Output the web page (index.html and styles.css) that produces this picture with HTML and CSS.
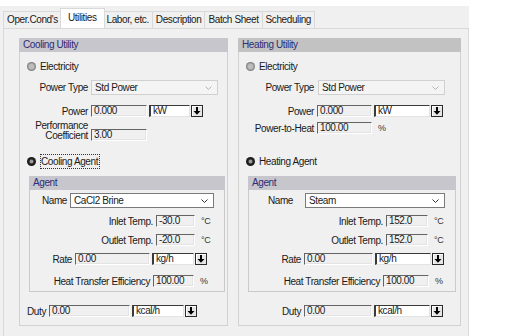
FILE: index.html
```html
<!DOCTYPE html>
<html lang="en">
    <head>
        <meta charset="utf-8">
        <link rel="stylesheet" href="styles.css">
    </head>
    <body>
<div class="window">
    <div class="tabs">
        <div class="tab">Oper.Cond's</div>
        <div class="tab active">Utilities</div>
        <div class="tab">Labor, etc.</div>
        <div class="tab">Description</div>
        <div class="tab">Batch Sheet</div>
        <div class="tab">Scheduling</div>
    </div>
    <div class="page">

        <!-- cooling -->
        <div class="group cool">
            <div class="ghead">Cooling Utility</div>
            <div class="row elec"><span class="radio"></span><span class="rtext">Electricity</span></div>
            <div class="row ptype">
                <span class="lbl w68">Power Type</span>
                <div class="combo off w127"><span>Std Power</span><svg width="7" height="4" viewBox="0 0 7 4"><path d="M0.5 0.5L3.5 3.5L6.5 0.5" fill="none" stroke="#b4b4b4"/></svg></div>
            </div>
            <div class="row power">
                <span class="lbl w68">Power</span>
                <div class="box w56">0.000</div>
                <div class="unit w41">kW</div>
                <div class="btn"><svg width="8" height="8" viewBox="0 0 8 8"><path d="M4 0v4.5" stroke="#000" stroke-width="2"/><path d="M0.5 4H7.5L4 7.8Z" fill="#000"/></svg></div>
            </div>
            <div class="row perf">
                <span class="lbl w68 two">Performance<br>Coefficient</span>
                <div class="box w56">3.00</div>
            </div>
            <div class="row agentsel"><span class="radio on"></span><span class="rtext focus">Cooling Agent</span></div>

            <div class="sub">
                <div class="ghead">Agent</div>
                <div class="row name">
                    <span class="lbl w37">Name</span>
                    <div class="combo w144"><span>CaCl2 Brine</span><svg width="7" height="4" viewBox="0 0 7 4"><path d="M0.5 0.5L3.5 3.5L6.5 0.5" fill="none" stroke="#333"/></svg></div>
                </div>
                <div class="row inlet">
                    <span class="lbl w123">Inlet Temp.</span>
                    <div class="box w39">-30.0</div>
                    <span class="suffix">°C</span>
                </div>
                <div class="row outlet">
                    <span class="lbl w123">Outlet Temp.</span>
                    <div class="box w39">-20.0</div>
                    <span class="suffix">°C</span>
                </div>
                <div class="row rate">
                    <span class="lbl w42">Rate</span>
                    <div class="box w75">0.00</div>
                    <div class="unit w42">kg/h</div>
                    <div class="btn"><svg width="8" height="8" viewBox="0 0 8 8"><path d="M4 0v4.5" stroke="#000" stroke-width="2"/><path d="M0.5 4H7.5L4 7.8Z" fill="#000"/></svg></div>
                </div>
                <div class="row hte">
                    <span class="lbl w120">Heat Transfer Efficiency</span>
                    <div class="box w41">100.00</div>
                    <span class="suffix">%</span>
                </div>
            </div>

            <div class="row duty">
                <span class="lbl w26">Duty</span>
                <div class="box w81">0.00</div>
                <div class="unit w52">kcal/h</div>
                <div class="btn"><svg width="8" height="8" viewBox="0 0 8 8"><path d="M4 0v4.5" stroke="#000" stroke-width="2"/><path d="M0.5 4H7.5L4 7.8Z" fill="#000"/></svg></div>
            </div>
        </div>

        <!-- heating -->
        <div class="group heat">
            <div class="ghead">Heating Utility</div>
            <div class="row elec"><span class="radio"></span><span class="rtext">Electricity</span></div>
            <div class="row ptype">
                <span class="lbl w75">Power Type</span>
                <div class="combo off w127 gap1"><span>Std Power</span><svg width="7" height="4" viewBox="0 0 7 4"><path d="M0.5 0.5L3.5 3.5L6.5 0.5" fill="none" stroke="#b4b4b4"/></svg></div>
            </div>
            <div class="row power">
                <span class="lbl w75">Power</span>
                <div class="box w55">0.000</div>
                <div class="unit w56">kW</div>
                <div class="btn"><svg width="8" height="8" viewBox="0 0 8 8"><path d="M4 0v4.5" stroke="#000" stroke-width="2"/><path d="M0.5 4H7.5L4 7.8Z" fill="#000"/></svg></div>
            </div>
            <div class="row pth">
                <span class="lbl w75">Power-to-Heat</span>
                <div class="box w55">100.00</div>
                <span class="suffix">%</span>
            </div>
            <div class="row agentsel"><span class="radio on"></span><span class="rtext">Heating Agent</span></div>

            <div class="sub">
                <div class="ghead">Agent</div>
                <div class="row name">
                    <span class="lbl w44">Name</span>
                    <div class="combo w140 gap9"><span>Steam</span><svg width="7" height="4" viewBox="0 0 7 4"><path d="M0.5 0.5L3.5 3.5L6.5 0.5" fill="none" stroke="#333"/></svg></div>
                </div>
                <div class="row inlet">
                    <span class="lbl w134">Inlet Temp.</span>
                    <div class="box w42">152.0</div>
                    <span class="suffix">°C</span>
                </div>
                <div class="row outlet">
                    <span class="lbl w134">Outlet Temp.</span>
                    <div class="box w42">152.0</div>
                    <span class="suffix">°C</span>
                </div>
                <div class="row rate">
                    <span class="lbl w52">Rate</span>
                    <div class="box w69">0.00</div>
                    <div class="unit w56">kg/h</div>
                    <div class="btn"><svg width="8" height="8" viewBox="0 0 8 8"><path d="M4 0v4.5" stroke="#000" stroke-width="2"/><path d="M0.5 4H7.5L4 7.8Z" fill="#000"/></svg></div>
                </div>
                <div class="row hte">
                    <span class="lbl w131">Heat Transfer Efficiency</span>
                    <div class="box w46">100.00</div>
                    <span class="suffix">%</span>
                </div>
            </div>

            <div class="row duty">
                <span class="lbl w62">Duty</span>
                <div class="box w68">0.00</div>
                <div class="unit w56">kcal/h</div>
                <div class="btn"><svg width="8" height="8" viewBox="0 0 8 8"><path d="M4 0v4.5" stroke="#000" stroke-width="2"/><path d="M0.5 4H7.5L4 7.8Z" fill="#000"/></svg></div>
            </div>
        </div>

    </div>
</div>
    </body>
</html>
```

FILE: styles.css
```css
body{
    margin: 0;
    background: #fff;
    font-family: "Liberation Sans", Arial, sans-serif;
    font-size: 10px;
    letter-spacing: -0.4px;
    color: #1a1a1a;
}
.window{
    width: 469px;
    height: 330px;
    margin-top: 6px;
    background: #f0f0f0;
}

/* tab strip */
.tabs{
    display: flex;
    align-items: flex-end;
    height: 22px;
    padding-left: 3px;
}
.tab{
    height: 16px;
    line-height: 15px;
    padding: 0 3px;
    border: 1px solid #d9d9d9;
    border-bottom: 0;
    margin-right: -1px;
    background: #f0f0f0;
}
.tab.active{
    height: 19px;
    line-height: 17px;
    background: #fff;
    margin-left: -1px;
    margin-right: -2px;
    padding: 0 7px;
    position: relative;
}
.page{
    display: flex;
    align-items: flex-start;
    gap: 10px;
    margin-left: 3px;
    height: 301px;
    border: 1px solid #d9d9d9;
    padding: 9px 0 0 15px;
}

/* group boxes */
.group{
    border: 1px solid #d2d2d2;
    border-top: 0;
    height: 287px;
}
.cool{ width: 207px; }
.heat{ width: 221px; }
.ghead{
    height: 14px;
    line-height: 14px;
    margin: 0 -1px;
    padding-left: 4px;
    background: #c6c6cc;
    color: #2c2c78;
}
.heat > .ghead{ background: #c2c2c2; }
.sub{
    margin-left: 9px;
    margin-top: 7px;
    height: 115px;
    border: 1px solid #cacaca;
    border-top: 0;
}
.cool .sub{ width: 194px; }
.heat .sub{ width: 206px; }

.row{
    display: flex;
    align-items: center;
}
.lbl{
    text-align: right;
    margin-right: 3px;
    white-space: nowrap;
}
.lbl.two{
    line-height: 10px;
    align-self: flex-start;
}

/* row spacing */
.elec{ height: 11px; margin-top: 9px; padding-left: 7px; }
.ptype{ height: 15px; margin-top: 8px; }
.power{ height: 12px; margin-top: 10px; }
.perf{ height: 22px; margin-top: 4px; align-items: flex-end; }
.perf .box{ margin-bottom: 2px; }
.pth{ height: 12px; margin-top: 5px; }
.agentsel{ height: 15px; margin-top: 11px; padding-left: 7px; }
.heat .agentsel{ margin-top: 20px; }
.name{ height: 15px; margin-top: 3px; }
.inlet, .outlet, .rate{ height: 12px; margin-top: 7px; }
.hte{ height: 12px; margin-top: 10px; }
.duty{ height: 12px; margin-top: 13px; }

/* widths */
.w26{ width: 26px; } .w37{ width: 37px; } .w39{ width: 39px; } .w41{ width: 41px; }
.w42{ width: 42px; } .w44{ width: 44px; } .w46{ width: 46px; } .w52{ width: 52px; }
.w55{ width: 55px; } .w56{ width: 56px; } .w62{ width: 62px; } .w68{ width: 68px; }
.w69{ width: 69px; } .w75{ width: 75px; } .w81{ width: 81px; } .w120{ width: 120px; }
.w123{ width: 123px; } .w127{ width: 127px; } .w131{ width: 131px; } .w134{ width: 134px; }
.w140{ width: 140px; } .w144{ width: 144px; }
.gap1{ margin-left: 1px; }
.gap9{ margin-left: 9px; }

/* radio buttons */
.radio{
    width: 9px;
    height: 9px;
    border-radius: 50%;
    background: radial-gradient(circle, #bdbdbd 0 35%, #8a8a8a 60%, #3c3c3c 100%);
    margin-right: 4px;
    flex: none;
}
.radio.on{
    background: radial-gradient(circle, #9a9a9a 0 22%, #222 38%, #111 100%);
}
.rtext{
    line-height: 11px;
}
.rtext.focus{
    border: 1px dotted #333;
    padding: 1px 1px 1px 0;
}

/* fields */
.box{
    box-sizing: border-box;
    height: 12px;
    line-height: 10px;
    padding-left: 2px;
    background: #f0f0f0;
    border-top: 1px solid #646464;
    border-left: 1px solid #646464;
    border-right: 1px solid #fff;
    border-bottom: 1px solid #fff;
    box-shadow: inset -1px -1px 0 #e3e3e3;
}
.unit{
    box-sizing: border-box;
    height: 12px;
    line-height: 10px;
    padding-left: 2px;
    margin-left: 2px;
    background: #fff;
    border-top: 1px solid #3a3a3a;
    border-left: 2px solid #3a3a3a;
    border-right: 1px solid #e3e3e3;
    border-bottom: 1px solid #e3e3e3;
}
.btn{
    box-sizing: border-box;
    width: 12px;
    height: 12px;
    margin-left: 1px;
    border: 1px solid #2a2a2a;
    box-shadow: inset 1px 1px 0 #fff;
    background: #e6e6e6;
    display: flex;
    align-items: center;
    justify-content: center;
}
.combo{
    box-sizing: border-box;
    height: 15px;
    display: flex;
    align-items: center;
    justify-content: space-between;
    padding: 0 5px 0 3px;
    background: #fff;
    border: 1px solid #7a7a7a;
}
.combo.off{
    background: #f4f4f4;
    border-color: #d0d0d0;
}
.suffix{
    margin-left: 6px;
    color: #333;
    font-size: 9px;
}
```
